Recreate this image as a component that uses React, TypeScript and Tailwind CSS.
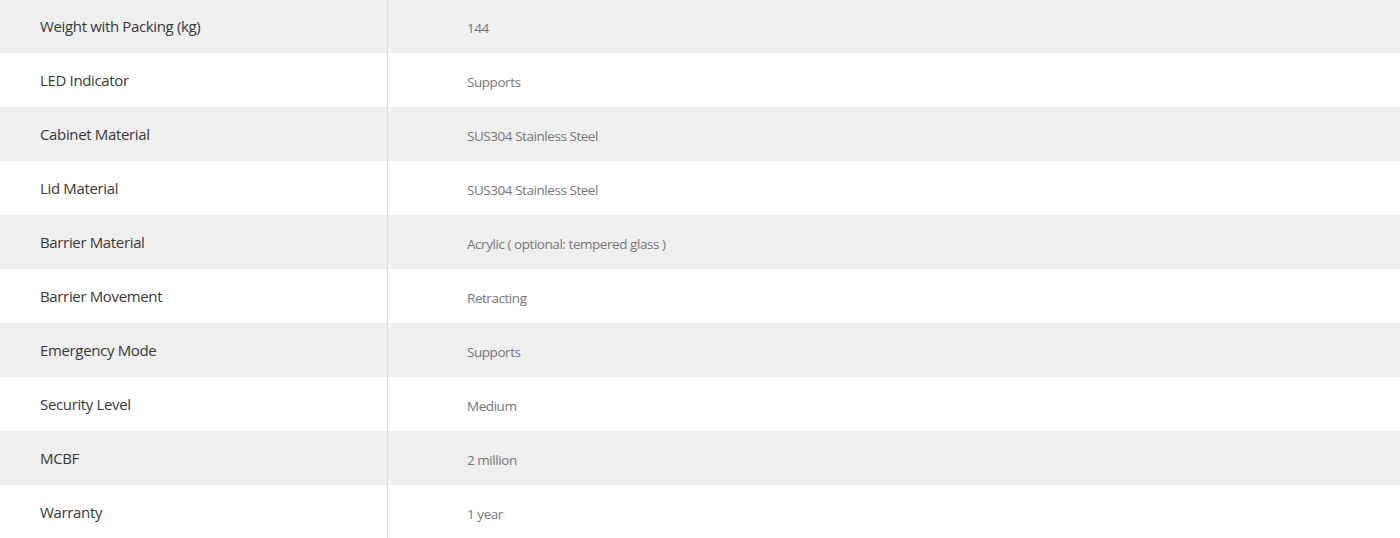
const specs = [
  ['Weight with Packing (kg)', '144'],
  ['LED Indicator', 'Supports'],
  ['Cabinet Material', 'SUS304 Stainless Steel'],
  ['Lid Material', 'SUS304 Stainless Steel'],
  ['Barrier Material', 'Acrylic ( optional: tempered glass )'],
  ['Barrier Movement', 'Retracting'],
  ['Emergency Mode', 'Supports'],
  ['Security Level', 'Medium'],
  ['MCBF', '2 million'],
  ['Warranty', '1 year'],
]

export default function App() {
  return (
    <div className="w-[1400px] h-[538px] overflow-hidden bg-white font-['Open_Sans',sans-serif]">
      <div className="-mt-px">
        {specs.map(([label, value], i) => (
          <div
            key={label}
            className={`flex h-[54px] ${i % 2 === 0 ? 'bg-[#efefef]' : 'bg-white'}`}
          >
            <div className="w-[388px] flex items-center pl-10 border-r border-[#dcdcdc] text-[15px] tracking-[-0.35px] text-[#383838]">
              {label}
            </div>
            <div className="flex-1 flex items-center pl-[79px] pt-1 text-[13.5px] tracking-[-0.45px] text-[#777]">
              {value}
            </div>
          </div>
        ))}
      </div>
    </div>
  )
}
